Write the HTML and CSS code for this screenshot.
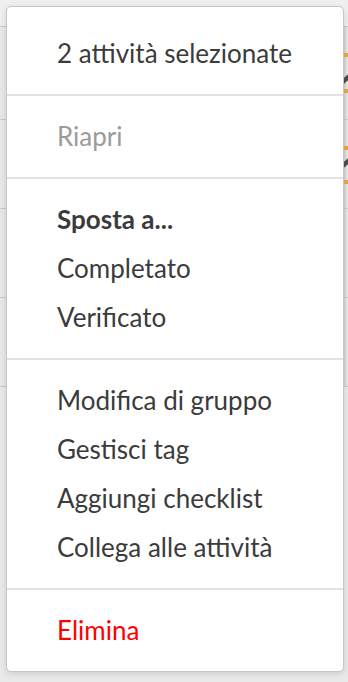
FILE: index.html
```html
<!DOCTYPE html>
<html lang="it">
<head>
<meta charset="utf-8">
<title>Menu</title>
<link rel="stylesheet" href="styles.css">
</head>
<body>
<div class="page">
  <div class="bg-header"></div>
  <div class="bg-row r1"><span class="mark m-orange a"></span><span class="mark m-dark b"></span><span class="mark m-orange c"></span></div>
  <div class="bg-row r2"><span class="mark m-orange a"></span><span class="mark m-dark b"></span><span class="mark m-orange c"></span></div>
  <div class="bg-row r3"></div>
  <div class="bg-row r4"></div>
</div>

<div class="menu">
  <div class="section title-section">
    <div class="item">2 attività selezionate</div>
  </div>
  <div class="section">
    <div class="item disabled">Riapri</div>
  </div>
  <div class="section">
    <div class="item bold">Sposta a...</div>
    <div class="item">Completato</div>
    <div class="item">Verificato</div>
  </div>
  <div class="section">
    <div class="item">Modifica di gruppo</div>
    <div class="item">Gestisci tag</div>
    <div class="item">Aggiungi checklist</div>
    <div class="item">Collega alle attività</div>
  </div>
  <div class="section">
    <div class="item danger">Elimina</div>
  </div>
</div>
</body>
</html>
```
FILE: styles.css
```css
html, body {
  margin: 0;
  padding: 0;
}
body {
  width: 348px;
  height: 682px;
  overflow: hidden;
  background: #e9e9e9;
  font-family: Lato, "Open Sans", sans-serif;
  position: relative;
}
.page {
  display: flex;
  flex-direction: column;
}
.bg-header {
  height: 26px;
  background: #efefef;
  border-bottom: 1px solid #c9c9c9;
}
.bg-row {
  height: 88px;
  border-bottom: 1px solid #c9c9c9;
  background: #e8e8e8;
  position: relative;
}
.bg-row.r1 { height: 92px; }
.bg-row::after {
  content: "";
  position: absolute;
  right: 2px;
  top: 0;
  bottom: 0;
  width: 2px;
  background: #d6d6d6;
}
.mark {
  position: absolute;
  right: 0;
  width: 4px;
  z-index: 1;
}
.m-orange { background: #e8a432; height: 4px; }
.m-dark { background: #4a4a4a; height: 6px; width: 4px; transform: skewY(-40deg); }
.r1 .a { top: 26px; }
.r1 .b { top: 49px; }
.r1 .c { top: 62px; }
.r2 .a { top: 26px; }
.r2 .b { top: 40px; }
.r2 .c { top: 60px; }

.menu {
  position: absolute;
  left: 6px;
  top: 6px;
  width: 336px;
  background: #fff;
  border: 1px solid #c6c6c6;
  border-radius: 5px;
  box-shadow: 0 2px 6px rgba(0, 0, 0, 0.12);
}
.section {
  border-top: 2px solid #e3e3e3;
  padding: 16px 0;
  display: flex;
  flex-direction: column;
}
.section.title-section {
  border-top: none;
  padding: 22px 0 16px;
}
.item {
  height: 49px;
  line-height: 49px;
  padding-left: 50px;
  font-size: 26px;
  color: #3b3b3b;
  white-space: nowrap;
}
.item.bold {
  font-weight: 700;
}
.item.disabled {
  color: #9b9b9b;
}
.item.danger {
  color: #ff0000;
}
```
